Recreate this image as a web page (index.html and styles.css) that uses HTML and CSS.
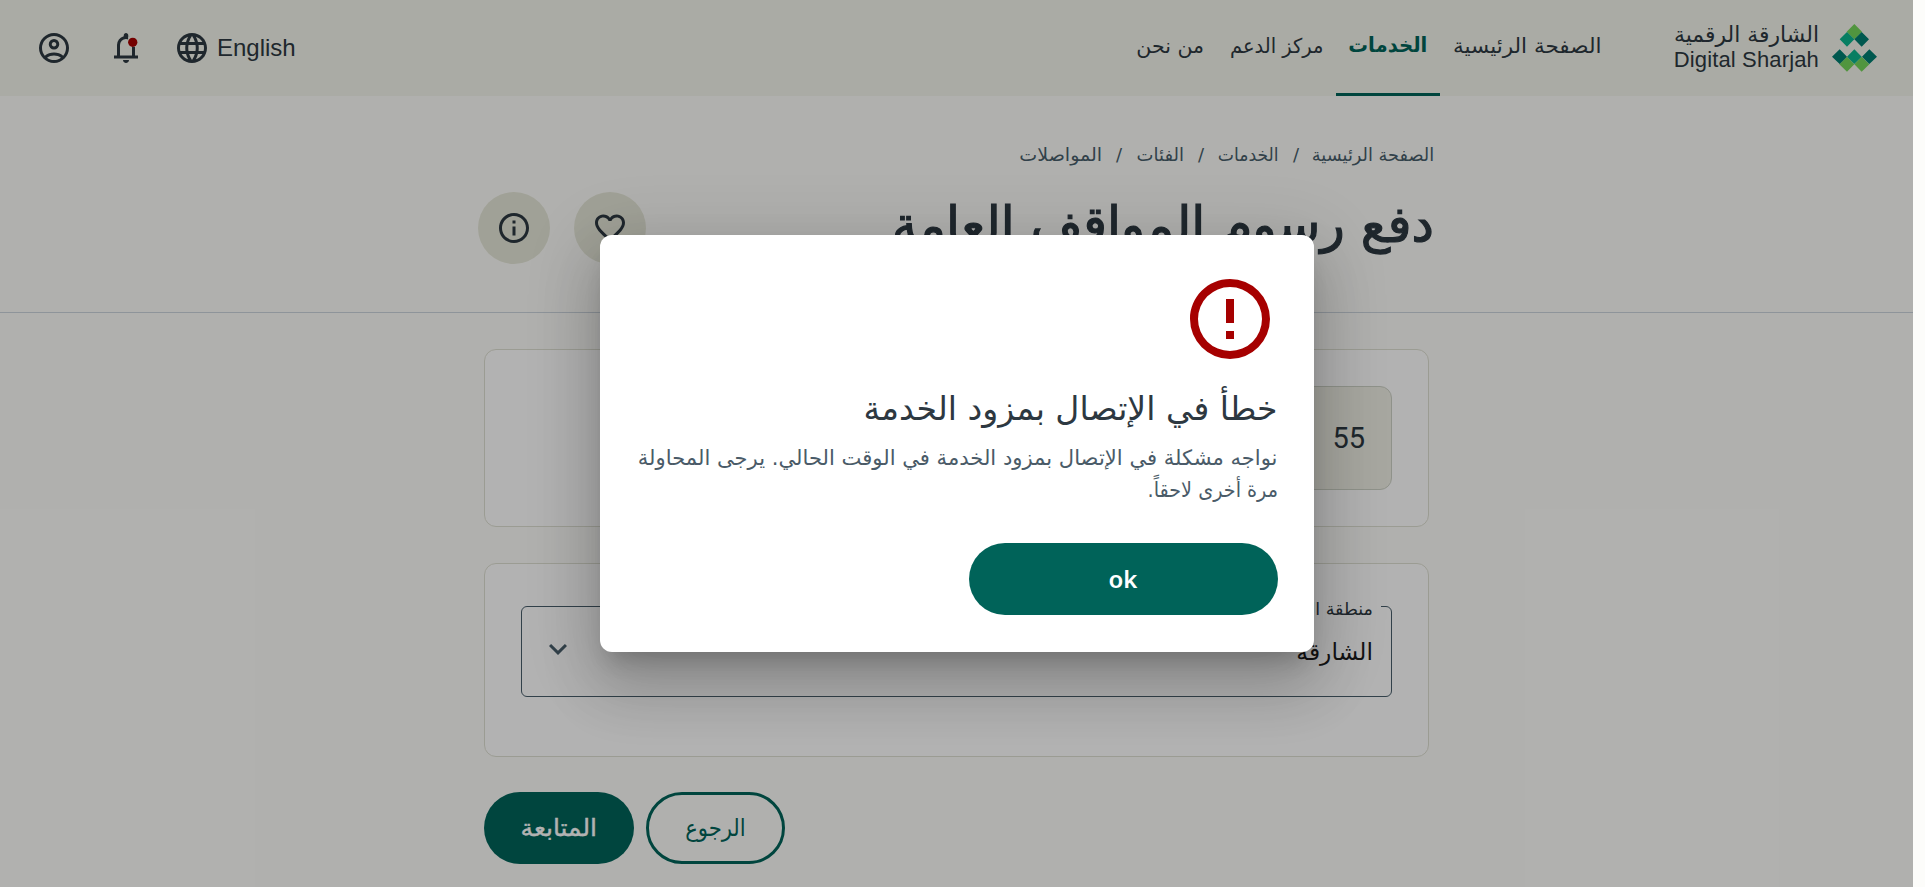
FILE: index.html
```html
<!DOCTYPE html>
<html lang="ar" dir="rtl">
<head>
<meta charset="utf-8">
<title>دفع رسوم المواقف العامة</title>
<link rel="stylesheet" href="styles.css">
</head>
<body>
<div class="page">
  <header class="topbar">
    <div class="brand">
      <svg class="brand-mark" viewBox="636 71 135 144" aria-hidden="true">
        <path fill="#75d65b" d="M703 71l23 23-23 23-23-23zM681 169l22 23-22 22-23-22zM725 169l23 23-23 22-22-22z"/>
        <path fill="#0bb58d" d="M681 95l22 22-22 22-22-22zM703 147l22 22-22 22-22-22z"/>
        <path fill="#007e71" d="M725 95l22 22-22 22-22-22zM659 147l22 22-22 22-23-22zM748 147l23 22-23 22-22-22z"/>
      </svg>
      <div class="brand-name">
        <span class="brand-ar">الشارقة الرقمية</span>
        <span class="brand-en" dir="ltr">Digital Sharjah</span>
      </div>
    </div>
    <nav class="nav">
      <a class="nav-item nav-home"><span>الصفحة الرئيسية</span></a>
      <a class="nav-item nav-services active"><span>الخدمات</span></a>
      <a class="nav-item nav-support"><span>مركز الدعم</span></a>
      <a class="nav-item nav-about"><span>من نحن</span></a>
    </nav>
    <div class="tools">
      <a class="lang"><span dir="ltr">English</span>
        <svg class="icon" viewBox="0 0 24 24"><path d="M11.99 2C6.47 2 2 6.48 2 12s4.47 10 9.99 10C17.52 22 22 17.52 22 12S17.52 2 11.99 2zm6.93 6h-2.95c-.32-1.25-.78-2.45-1.38-3.56 1.84.63 3.37 1.91 4.33 3.56zM12 4.04c.83 1.2 1.48 2.53 1.91 3.96h-3.82c.43-1.43 1.08-2.76 1.91-3.96zM4.26 14C4.1 13.36 4 12.69 4 12s.1-1.36.26-2h3.38c-.08.66-.14 1.32-.14 2s.06 1.34.14 2H4.26zm.82 2h2.95c.32 1.25.78 2.45 1.38 3.56-1.84-.63-3.37-1.9-4.33-3.56zm2.95-8H5.08c.96-1.66 2.49-2.93 4.33-3.56C8.81 5.55 8.35 6.75 8.03 8zM12 19.96c-.83-1.2-1.48-2.53-1.91-3.96h3.82c-.43 1.43-1.08 2.76-1.91 3.96zM14.34 14H9.66c-.09-.66-.16-1.32-.16-2s.07-1.35.16-2h4.68c.09.65.16 1.32.16 2s-.07 1.34-.16 2zm.25 5.56c.6-1.11 1.06-2.31 1.38-3.56h2.95c-.96 1.65-2.49 2.93-4.33 3.56zM16.36 14c.08-.66.14-1.32.14-2s-.06-1.34-.14-2h3.38c.16.64.26 1.31.26 2s-.1 1.36-.26 2h-3.38z"/></svg>
      </a>
      <svg class="icon" viewBox="0 0 24 24">
        <path d="M4 19v-2h2v-7q0-2.075 1.25-3.688T10.5 4.2v-.7q0-.625.438-1.063T12 2t1.063.438T13.5 3.5v.7q2 .5 3.25 2.113T18 10v7h2v2zm8 3q-.825 0-1.412-.587T10 20h4q0 .825-.587 1.413T12 22m-4-5h8v-7q0-1.65-1.175-2.825T12 6T9.175 7.175T8 10z"/>
        <path class="notch" d="M13.4 4.2H19v7h-5.6z"/>
        <circle class="dot" cx="16.5" cy="8.2" r="3.1"/>
      </svg>
      <svg class="icon" viewBox="0 0 24 24"><path d="M5.85 17.1q1.275-.975 2.85-1.537T12 15t3.3.563t2.85 1.537q.875-1.025 1.363-2.325T20 12q0-3.325-2.337-5.663T12 4T6.337 6.338T4 12q0 1.475.488 2.775T5.85 17.1M12 13q-1.475 0-2.488-1.012T8.5 9.5t1.013-2.488T12 6t2.488 1.013T15.5 9.5t-1.012 2.488T12 13m0 9q-2.075 0-3.9-.788t-3.175-2.137T2.788 15.9T2 12t.788-3.9t2.137-3.175T8.1 2.788T12 2t3.9.788t3.175 2.137T21.213 8.1T22 12t-.788 3.9t-2.137 3.175t-3.175 2.138T12 22m0-2q1.325 0 2.5-.387t2.15-1.113q-.975-.725-2.15-1.112T12 17t-2.5.388T7.35 18.5q.975.725 2.15 1.113T12 20m0-9q.65 0 1.075-.425T13.5 9.5t-.425-1.075T12 8t-1.075.425T10.5 9.5t.425 1.075T12 11"/></svg>
    </div>
  </header>

  <section class="hero">
    <div class="container">
      <nav class="crumbs">
        <a class="crumb-home"><span>الصفحة الرئيسية</span></a><i>/</i>
        <a class="crumb-services"><span>الخدمات</span></a><i>/</i>
        <a class="crumb-categories"><span>الفئات</span></a><i>/</i>
        <a class="crumb-transport"><span>المواصلات</span></a>
      </nav>
      <div class="title-row">
        <h1>دفع رسوم المواقف العامة</h1>
        <div class="actions">
          <button class="round"><svg class="icon" viewBox="0 0 24 24"><path d="M16.5 3c-1.74 0-3.41.81-4.5 2.09C10.91 3.81 9.24 3 7.5 3 4.42 3 2 5.42 2 8.5c0 3.78 3.4 6.86 8.55 11.54L12 21.35l1.45-1.32C18.6 15.36 22 12.28 22 8.5 22 5.42 19.58 3 16.5 3zm-4.4 15.55l-.1.1-.1-.1C7.14 14.24 4 11.39 4 8.5 4 6.5 5.5 5 7.5 5c1.54 0 3.04.99 3.57 2.36h1.87C13.46 5.99 14.96 5 16.5 5c2 0 3.5 1.5 3.5 3.5 0 2.89-3.14 5.74-7.9 10.05z"/></svg></button>
          <button class="round"><svg class="icon" viewBox="0 0 24 24"><path d="M11 7h2v2h-2zm0 4h2v6h-2zm1-9C6.48 2 2 6.48 2 12s4.48 10 10 10 10-4.48 10-10S17.52 2 12 2zm0 18c-4.41 0-8-3.59-8-8s3.59-8 8-8 8 3.59 8 8-3.59 8-8 8z"/></svg></button>
        </div>
      </div>
    </div>
  </section>

  <main class="content">
    <div class="card card-plate">
      <div class="plate">55</div>
    </div>
    <div class="card card-zone">
      <div class="select">
        <label class="select-label">منطقة المواقف</label>
        <span class="select-value">الشارقة</span>
        <svg class="icon chevron" viewBox="0 0 24 24"><path d="M16.59 8.59L12 13.17 7.41 8.59 6 10l6 6 6-6z"/></svg>
      </div>
    </div>
    <div class="buttons">
      <button class="btn btn-outline"><span>الرجوع</span></button>
      <button class="btn btn-primary"><span>المتابعة</span></button>
    </div>
  </main>

  <div class="backdrop">
    <div class="dialog" role="alertdialog">
      <svg class="error-icon" viewBox="0 0 24 24"><path d="M11 15h2v2h-2zm0-8h2v6h-2zm1-5C6.47 2 2 6.5 2 12a10 10 0 0 0 10 10 10 10 0 0 0 10-10A10 10 0 0 0 12 2zm0 18a8 8 0 1 1 0-16 8 8 0 0 1 0 16z"/></svg>
      <h2>خطأ في الإتصال بمزود الخدمة</h2>
      <p><span class="line">نواجه مشكلة في الإتصال بمزود الخدمة في الوقت الحالي. يرجى المحاولة</span><span class="line line-last">مرة أخرى لاحقاً.</span></p>
      <button class="ok">ok</button>
    </div>
  </div>
</div>
</body>
</html>
```
FILE: styles.css
```css
:root {
  --ink: #2d3841;
  --muted: #485d6a;
  --primary: #006359;
  --topbar: #f4f5ec;
  --surface: #fdfdfa;
}

* { box-sizing: border-box; }

html { background: #fcfcfa; }

body {
  margin: 0;
  font-family: "DejaVu Sans", sans-serif;
  color: var(--ink);
}

button { font-family: inherit; padding: 0; border: 0; }

.page {
  position: relative;
  width: 1913px;
  height: 887px;
  margin-right: 12px;
  overflow: hidden;
  background: var(--surface);
}

.icon { display: block; width: 36px; height: 36px; fill: var(--ink); flex: none; }

/* Top bar */
.topbar {
  display: flex;
  height: 96px;
  padding: 0 36px;
  background: var(--topbar);
}

.brand { display: flex; width: 202px; gap: 13px; padding-top: 24px; }
.brand-mark { width: 45px; height: 48px; flex: none; }
.brand-name { display: flex; flex-direction: column; white-space: nowrap; }
.brand-ar { font-size: 21.9px; line-height: 24px; margin-top: -1px; }
.brand-en {
  font-family: "Liberation Sans", Arial, sans-serif;
  font-size: 22px;
  letter-spacing: .15px;
  line-height: 26px;
}

.nav { display: flex; margin-right: 61px; }
.nav-item {
  box-sizing: content-box;
  height: 93px;
  padding: 0 13px;
  border-bottom: 3px solid transparent;
  font-size: 20.5px;
  line-height: 92px;
  white-space: nowrap;
}
.nav-item.active {
  border-color: var(--primary);
  color: var(--primary);
  font-weight: 700;
  line-height: 90px;
}
.nav-item span, .crumbs span, .btn span, .line {
  display: inline-block;
  transform: scaleX(var(--fit, 1));
  transform-origin: right;
}
.nav-home { width: 148px; --fit: 1.05; }
.nav-services { width: 78px; --fit: .96; }
.nav-support { width: 93px; --fit: .95; }
.nav-about { width: 67px; }

.tools { display: flex; align-items: center; gap: 33px; margin-right: auto; }
.tools > .icon:last-child { margin-right: 3px; }
.lang {
  display: flex;
  align-items: center;
  gap: 7px;
  font: 24px "Liberation Sans", Arial, sans-serif;
}
.lang .icon { margin-left: -3px; }
.tools { gap: 36px; }
.tools > .icon:last-child { margin-right: 0; }
.lang .icon { margin-left: -6px; }
.notch { fill: var(--topbar); }
.dot { fill: #a60000; }

/* Page heading */
.hero { height: 217px; border-bottom: 1px solid #ccd4dd; }
.container { width: 956px; margin-right: 479px; padding-top: 43px; }
.crumbs {
  display: flex;
  gap: 14px;
  height: 30px;
  font-size: 18px;
  line-height: 32px;
  color: var(--muted);
  white-space: nowrap;
}
.crumbs i { width: 6px; font-style: normal; }
.crumb-home { width: 121px; --fit: .985; }
.crumb-services { width: 61px; --fit: .957; }
.crumb-categories { width: 48px; }
.crumb-transport { width: 83px; --fit: 1.06; }

.title-row { display: flex; justify-content: space-between; margin-top: 23px; }
h1 {
  margin: 0;
  font-size: 50.3px;
  font-weight: 400;
  line-height: 66px;
  -webkit-text-stroke: 1.2px var(--ink);
}
.actions { display: flex; gap: 24px; }
.round {
  display: grid;
  place-items: center;
  width: 72px;
  height: 72px;
  border-radius: 50%;
  background: #e6e7d8;
}

/* Form cards */
.content { width: 945px; margin: 36px 484px 0 0; }
.card {
  padding: 36px;
  border: 1px solid #dfe0d3;
  border-radius: 12px;
  background: #fff;
}
.card-plate { height: 178px; }
.plate {
  width: 200px;
  height: 104px;
  padding-right: 26px;
  border: 1px solid #cdd1c6;
  border-radius: 12px;
  background: #efefe5;
  font: 29px/102px Roboto, sans-serif;
}
.card-zone { height: 194px; margin-top: 36px; padding-top: 42px; }
.select {
  position: relative;
  display: flex;
  align-items: center;
  justify-content: space-between;
  height: 91px;
  padding: 0 18px;
  border: 1px solid var(--muted);
  border-radius: 6px;
}
.select-label {
  position: absolute;
  top: -12px;
  right: 10px;
  padding: 0 8px;
  background: #fff;
  font-size: 17.5px;
  line-height: 28px;
}
.select-value { font-size: 23.4px; color: #1c1c1c; }
.chevron { margin-top: -6px; fill: var(--muted); }

.buttons { display: flex; justify-content: flex-end; gap: 12px; margin-top: 35px; }
.btn {
  height: 72px;
  border-radius: 36px;
  font-size: 24px;
  line-height: 66px;
}
.btn-outline {
  width: 139px;
  border: 3px solid var(--primary);
  background: transparent;
  color: var(--primary);
  --fit: .88;
}
.btn-primary {
  width: 150px;
  background: var(--primary);
  color: #fff;
  -webkit-text-stroke: .4px #fff;
  --fit: 1.04;
}
.btn span { transform-origin: center; }

/* Modal */
.backdrop {
  position: absolute;
  inset: 0;
  display: grid;
  place-items: center;
  background: rgba(0, 0, 0, .3);
}
.dialog {
  width: 714px;
  height: 417px;
  padding: 36px;
  border-radius: 12px;
  background: #fff;
  box-shadow: 0 16.5px 22.5px -10.5px rgba(0, 0, 0, .2),
    0 36px 57px 4.5px rgba(0, 0, 0, .14),
    0 13.5px 69px 12px rgba(0, 0, 0, .12);
}
.error-icon { display: block; width: 96px; height: 96px; fill: #a60000; }
h2 {
  margin: 18px 0 9px;
  font-size: 33.1px;
  font-weight: 400;
  line-height: 48px;
  white-space: nowrap;
}
.dialog p {
  display: flex;
  flex-direction: column;
  margin: 0 0 37px;
  font-size: 21.1px;
  line-height: 32px;
  color: #4a5b68;
  white-space: nowrap;
}
.line-last { --fit: .91; }
.ok {
  display: block;
  width: 309px;
  height: 72px;
  border-radius: 36px;
  background: var(--primary);
  color: #fff;
  font: 600 24px/68px "Noto Sans", sans-serif;
}
```
